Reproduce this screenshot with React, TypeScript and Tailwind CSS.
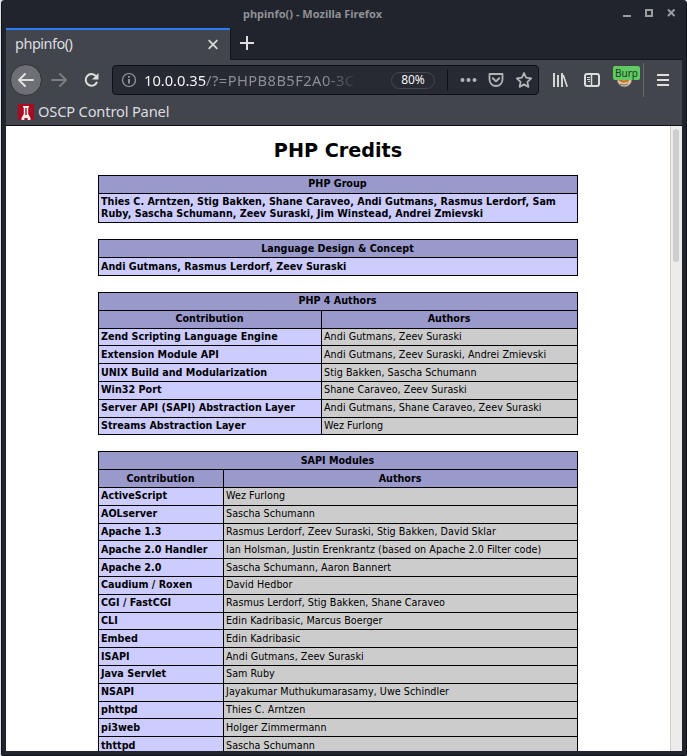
import type { ReactNode } from "react";

type Row = { h: number; name: string; authors: string; low?: boolean };

const php4: Row[] = [
  { h: 17, name: "Zend Scripting Language Engine", authors: "Andi Gutmans, Zeev Suraski" },
  { h: 18, name: "Extension Module API", authors: "Andi Gutmans, Zeev Suraski, Andrei Zmievski", low: true },
  { h: 18, name: "UNIX Build and Modularization", authors: "Stig Bakken, Sascha Schumann", low: true },
  { h: 18, name: "Win32 Port", authors: "Shane Caraveo, Zeev Suraski" },
  { h: 18, name: "Server API (SAPI) Abstraction Layer", authors: "Andi Gutmans, Shane Caraveo, Zeev Suraski" },
  { h: 17, name: "Streams Abstraction Layer", authors: "Wez Furlong" },
];

const sapi: Row[] = [
  { h: 18, name: "ActiveScript", authors: "Wez Furlong" },
  { h: 18, name: "AOLserver", authors: "Sascha Schumann" },
  { h: 17, name: "Apache 1.3", authors: "Rasmus Lerdorf, Zeev Suraski, Stig Bakken, David Sklar" },
  { h: 18, name: "Apache 2.0 Handler", authors: "Ian Holsman, Justin Erenkrantz (based on Apache 2.0 Filter code)", low: true },
  { h: 18, name: "Apache 2.0", authors: "Sascha Schumann, Aaron Bannert", low: true },
  { h: 18, name: "Caudium / Roxen", authors: "David Hedbor" },
  { h: 18, name: "CGI / FastCGI", authors: "Rasmus Lerdorf, Stig Bakken, Shane Caraveo" },
  { h: 17, name: "CLI", authors: "Edin Kadribasic, Marcus Boerger" },
  { h: 18, name: "Embed", authors: "Edin Kadribasic", low: true },
  { h: 18, name: "ISAPI", authors: "Andi Gutmans, Zeev Suraski", low: true },
  { h: 18, name: "Java Servlet", authors: "Sam Ruby" },
  { h: 18, name: "NSAPI", authors: "Jayakumar Muthukumarasamy, Uwe Schindler" },
  { h: 17, name: "phttpd", authors: "Thies C. Arntzen" },
  { h: 18, name: "pi3web", authors: "Holger Zimmermann", low: true },
  { h: 18, name: "thttpd", authors: "Sascha Schumann", low: true },
];

function Box({ children }: { children: ReactNode }) {
  return <div className="w-[480px] shrink-0 border-x border-b border-black">{children}</div>;
}

function Title({ children, low }: { children: ReactNode; low?: boolean }) {
  return (
    <div className={`h-[18px] border-t border-black bg-[#9999cc] pr-px text-center font-bold ${low ? "leading-[17px]" : "leading-[16px]"}`}>
      {children}
    </div>
  );
}

function Table({ title, rows, split, low }: { title: string; rows: Row[]; split: string; low?: boolean }) {
  return (
    <Box>
      <Title low={low}>{title}</Title>
      <div
        className={`flex h-[18px] border-t border-black bg-[#9999cc] text-center font-bold ${low ? "leading-[17px]" : "leading-[16px]"}`}
      >
        <div className={`${split} pr-px`}>Contribution</div>
        <div className="flex-1 border-l border-black pr-px">Authors</div>
      </div>
      {rows.map((r) => (
        <div
          key={r.name}
          className={`flex border-t border-black whitespace-nowrap ${r.low ? "leading-[17px]" : "leading-[16px]"}`}
          style={{ height: r.h }}
        >
          <div className={`${split} bg-[#ccccff] pl-[2px] font-bold tracking-[0.02px]`}>{r.name}</div>
          <div className="flex-1 border-l border-black bg-[#cccccc] pl-[2px] tracking-[0.05px]">{r.authors}</div>
        </div>
      ))}
    </Box>
  );
}

function TitleBar() {
  return (
    <div className="flex h-7 shrink-0 items-center pr-[5px] pl-[237px] text-[11px] font-bold text-[#8f9196]">
      <span className="grow">phpinfo() - Mozilla Firefox</span>
      <svg className="mb-[2px]" width="60" height="14" viewBox="0 0 60 14" fill="none" stroke="#9a9ca0" strokeWidth="2">
        <path d="M6 10h8" />
        <path d="M29 4h6v6h-6z" />
        <path d="M51 3.500l6.500 6.500M57.500 3.500L51 10" />
      </svg>
    </div>
  );
}

function TabBar() {
  return (
    <div className="flex h-8 shrink-0">
      <div className="flex w-[224px] items-center justify-between border-t-2 border-[#2a7bf6] bg-[#42454c] pr-[11px] pl-[9px] text-[14.500px] text-[#dcdde0]">
        <span className="mb-[2px] tracking-[-0.500px]">phpinfo()</span>
        <svg width="12" height="12" viewBox="0 0 12 12" stroke="#d8d8d8" strokeWidth="1.800">
          <path d="M1.700 1.200l8.600 8.600M10.300 1.200l-8.600 8.600" />
        </svg>
      </div>
      <div className="flex grow border-b border-l border-[#14151b] pt-[8px] pl-[9px]">
        <svg width="14" height="14" viewBox="0 0 14 14" stroke="#dedede" strokeWidth="2">
          <path d="M0 7h14M7 0v14" />
        </svg>
      </div>
    </div>
  );
}

function NavBar() {
  return (
    <div className="flex h-10 shrink-0 items-center">
      <div className="ml-1 flex size-8 shrink-0 items-center justify-center rounded-full border border-[#2e3036] bg-[#6f7075]">
        <svg width="18" height="16" viewBox="0 0 18 16" fill="none" stroke="#dededd" strokeWidth="2" strokeLinecap="round" strokeLinejoin="round">
          <path d="M2 8h14M8 2L2 8l6 6" />
        </svg>
      </div>
      <svg className="ml-[8px]" width="18" height="16" viewBox="0 0 18 16" fill="none" stroke="#7b7d81" strokeWidth="2" strokeLinecap="round" strokeLinejoin="round">
        <path d="M2 8h14M10 2l6 6-6 6" />
      </svg>
      <svg className="ml-[15px]" width="17" height="16" viewBox="0 0 17 16" fill="none" stroke="#dededd" strokeWidth="2">
        <path d="M13 4.200A5.800 5.800 0 1 0 14 9.800" />
        <path d="M15.500 1v6.500H9z" fill="#dededd" stroke="none" />
      </svg>
      <div className="ml-[12px] flex h-[30px] w-[427px] shrink-0 items-center rounded-[4px] border border-[#101116] bg-[#272933] pl-[8px]">
        <svg width="16" height="16" viewBox="0 0 16 16" fill="none" stroke="#9b9ca2">
          <circle cx="8" cy="8" r="6.500" strokeWidth="1.200" />
          <path d="M8 7v4.500M8 4v1.700" strokeWidth="1.800" />
        </svg>
        <div className="ml-[7px] w-[219px] text-[14.670px] whitespace-nowrap text-[#8d8e94] [mask-image:linear-gradient(to_right,black_82%,transparent_98%)]">
          <span className="text-[#f2f2f4]">10.0.0.35</span>
          <span className="tracking-[0.450px]">/?=PHPB8B5F2A0-3C</span>
        </div>
        <div className="ml-[28px] flex h-[17px] w-[44px] items-center justify-center rounded-full border border-[#444650] text-[12px] text-[#f5f5f5]">
          80%
        </div>
        <div className="ml-[12px] h-[22px] w-px bg-[#101116]" />
        <svg className="ml-[12px]" width="74" height="18" viewBox="0 0 74 18" fill="none" stroke="#b2b3b6" strokeWidth="2" strokeLinejoin="round">
          <g fill="#b2b3b6" stroke="none">
            <circle cx="2.500" cy="9" r="2" />
            <circle cx="8.500" cy="9" r="2" />
            <circle cx="14.500" cy="9" r="2" />
          </g>
          <path d="M29.500 3h13v5.500a6.500 6.500 0 0 1-13 0z" strokeWidth="1.800" />
          <path d="M32.800 7.200l3.200 3.200 3.200-3.200" strokeLinecap="round" />
          <path d="M64 2l2.100 4.700 5.100.6-3.800 3.500 1 5.100L64 13.400l-4.400 2.500 1-5.100-3.800-3.500 5.100-.6z" strokeWidth="1.800" />
        </svg>
      </div>
      <svg className="ml-[13px]" width="16" height="16" viewBox="0 0 16 16" stroke="#dcdcdc" strokeWidth="2">
        <path d="M2 1v14M6 3v12M10 1v14" strokeWidth="1.900" />
        <path d="M11.200 3l4 11.800" strokeWidth="1.600" />
      </svg>
      <svg className="ml-[16px]" width="16" height="14" viewBox="0 0 16 14" fill="none" stroke="#dcdcdc">
        <rect x="1" y="1" width="14" height="12" rx="2" strokeWidth="2" />
        <path d="M7.500 1v12" strokeWidth="1.500" />
        <path d="M3 4.500h3M3 6.500h3M4 8.500h2" />
      </svg>
      <div className="relative ml-[13px] flex h-[34px] w-[27px]">
        <svg className="absolute top-[8px] left-[3px]" width="17" height="17" viewBox="0 0 17 17">
          <circle cx="8.500" cy="8.500" r="7.300" fill="#d9cbb8" stroke="#8d7763" />
          <path d="M3 7h11l-2 5-3-1-3 1z" fill="#e79332" />
          <path d="M3 9l5 2 6-3" fill="none" stroke="#c06b25" strokeWidth="1.500" />
          <path d="M4 13q4 2 8 0" fill="none" stroke="#776b62" />
        </svg>
        <div className="absolute top-[3px] left-0 flex h-[14px] w-[27px] items-center justify-center rounded-[2px] bg-[#60ca63] text-[10px] leading-[13px] text-[#173d1e]">
          Burp
        </div>
      </div>
      <div className="ml-[3px] h-[34px] w-px bg-[#6b6d71]" />
      <svg className="ml-[13px]" width="12" height="12" viewBox="0 0 12 12" stroke="#dedede" strokeWidth="2">
        <path d="M0 1h12M0 6h12M0 11h12" />
      </svg>
    </div>
  );
}

export default function App() {
  return (
    <div className="h-[756px] w-[687px] overflow-hidden bg-[#dfe2e5] pl-px font-['Noto_Sans',sans-serif]">
      <div className="flex h-[756px] w-[686px] flex-col rounded-t-[4px] rounded-b-[2px] border-x border-b border-[#101219] bg-[#21242d] px-[4px] pb-[4px]">
        <TitleBar />
        <TabBar />
        <div className="shrink-0 border-b border-[#0e0f14] bg-[#42454c]">
          <NavBar />
          <div className="flex h-[25px] items-center pb-[2px] pl-[12px] text-[14.670px] text-[#dcdde0]">
            <svg width="16" height="16" viewBox="0 0 16 16">
              <path fill="#ab0b20" d="M0 0h16v16H0z" />
              <path d="M5 2h6v1.500h-.8V10l2.300 4v2H9.600v-2H6.400v2H3.500v-2l2.300-4V3.500H5z" fill="#f7eeee" />
              <path d="M7.300 4h1.400v7H7.300z" fill="#ab0b20" />
            </svg>
            <span className="mb-[2px] ml-[4px] tracking-[-0.170px]">OSCP Control Panel</span>
          </div>
        </div>
        <div className="flex min-h-0 grow bg-white">
          <div className="flex min-w-0 grow flex-col items-center gap-[16px] overflow-hidden font-['DejaVu_Sans',sans-serif] text-[9.600px] text-black">
            <h1 className="mb-[-16px] h-[49px] shrink-0 pt-[13px] text-[19.200px] leading-[24px] font-bold">PHP Credits</h1>
            <Box>
              <Title>PHP Group</Title>
              <div className="h-[29px] border-t border-black bg-[#ccccff] pt-[2px] pl-[2px] leading-[12px] font-bold tracking-[0.020px]">
                Thies C. Arntzen, Stig Bakken, Shane Caraveo, Andi Gutmans, Rasmus Lerdorf, Sam
                <br />
                Ruby, Sascha Schumann, Zeev Suraski, Jim Winstead, Andrei Zmievski
              </div>
            </Box>
            <Box>
              <Title low>Language Design &amp; Concept</Title>
              <div className="h-[18px] border-t border-black bg-[#ccccff] pl-[2px] leading-[17px] font-bold tracking-[0.020px]">
                Andi Gutmans, Rasmus Lerdorf, Zeev Suraski
              </div>
            </Box>
            <Table title="PHP 4 Authors" rows={php4} split="w-[222px]" />
            <Table title="SAPI Modules" rows={sapi} split="w-[124px]" low />
          </div>
          <div className="w-[12px] shrink-0 border-l border-[#d3cdc8] bg-[#edeceb] pt-[3px] pl-[2px]">
            <div className="h-[133px] w-[6px] rounded-full bg-[#cecece]" />
          </div>
        </div>
      </div>
    </div>
  );
}
